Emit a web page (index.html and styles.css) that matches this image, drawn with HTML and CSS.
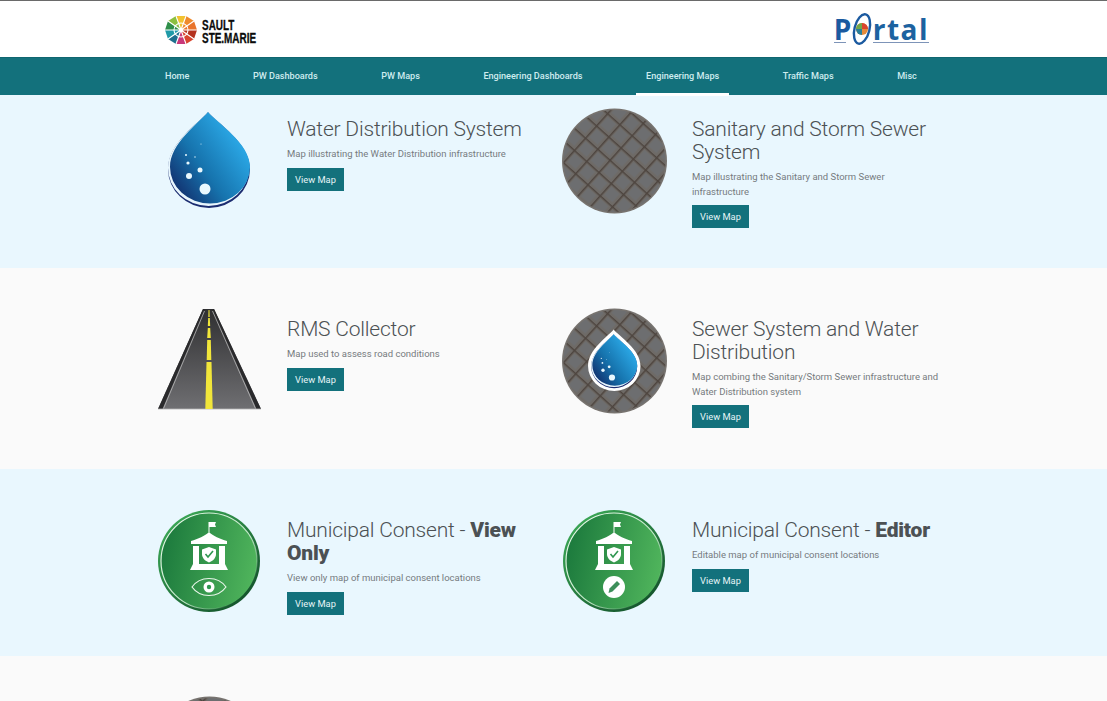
FILE: index.html
```html
<!DOCTYPE html>
<html lang="en">
<head>
<meta charset="utf-8">
<title>Portal - Engineering Maps</title>
<link rel="stylesheet" href="styles.css">
</head>
<body>
<header class="topbar">
  <div class="brand">
    <svg class="brand-mark" viewBox="0 0 32 30" aria-hidden="true">
      <polygon points="16,15 11,1 21,1" fill="#f2c230"/>
      <polygon points="16,15 21,1 29,6" fill="#ef8a2c"/>
      <polygon points="16,15 29,6 32,15" fill="#e9742b"/>
      <polygon points="16,15 32,15 29,24" fill="#b5321f"/>
      <polygon points="16,15 29,24 21,29" fill="#d8452f"/>
      <polygon points="16,15 21,29 11,29" fill="#c8387a"/>
      <polygon points="16,15 11,29 3,24" fill="#1e6f8e"/>
      <polygon points="16,15 3,24 0,15" fill="#1f9aa8"/>
      <polygon points="16,15 0,15 3,6" fill="#2f8f4a"/>
      <polygon points="16,15 3,6 11,1" fill="#8cbf3f"/>
      <g stroke="#fff" stroke-width="1.1" fill="none">
        <path d="M16 15 11 1M16 15 21 1M16 15 29 6M16 15H32M16 15 29 24M16 15 21 29M16 15 11 29M16 15 3 24M16 15H0M16 15 3 6"/>
        <circle cx="16" cy="15" r="7"/>
      </g>
    </svg>
    <div class="brand-name">SAULT<br>STE.MARIE</div>
  </div>
  <div class="portal">
    <span class="portal-p">P</span>
    <svg class="portal-o" viewBox="0 0 24 34" aria-hidden="true">
      <ellipse cx="12" cy="17" rx="7.500" ry="15" transform="rotate(14 12 17)" fill="#fff" stroke="#1b5aa0" stroke-width="2.400"/>
      <circle cx="12" cy="17" r="6" fill="#e58a3a"/>
      <path d="M12 17V11A6 6 0 0 1 18 17Z" fill="#d8452f"/>
      <path d="M12 17H6A6 6 0 0 1 12 11Z" fill="#6fa84a"/>
      <path d="M12 17V23A6 6 0 0 1 6 17Z" fill="#2a7f9a"/>
    </svg>
    <span class="portal-rest">rtal</span>
    <i class="portal-rule portal-rule-a"></i>
    <i class="portal-rule portal-rule-b"></i>
  </div>
</header>
<nav class="nav">
  <a class="nav-link">Home</a>
  <a class="nav-link">PW Dashboards</a>
  <a class="nav-link">PW Maps</a>
  <a class="nav-link">Engineering Dashboards</a>
  <a class="nav-link is-active">Engineering Maps</a>
  <a class="nav-link">Traffic Maps</a>
  <a class="nav-link">Misc</a>
</nav>
<main>
  <section class="band band-blue band-first">
    <article class="card">
      <svg class="icon" viewBox="0 0 105 106" aria-hidden="true">
        <defs>
          <linearGradient id="dropFill" x1="0.05" y1="0.85" x2="0.8" y2="0.25">
            <stop offset="0" stop-color="#12306e"/>
            <stop offset="0.45" stop-color="#1673ad"/>
            <stop offset="1" stop-color="#2aa6e4"/>
          </linearGradient>
          <pattern id="grate" width="16.500" height="16.500" patternUnits="userSpaceOnUse" patternTransform="rotate(42) translate(4 6)">
            <rect width="16.500" height="16.500" fill="#6e6a66"/>
            <rect x="3" y="3" width="11" height="11" fill="#6d6e70"/>
            <path d="M0 0H16.500M0 0V16.500" stroke="#4e453f" stroke-width="3"/>
          </pattern>
          <linearGradient id="greenFill" x1="0" y1="0.4" x2="1" y2="0.6">
            <stop offset="0" stop-color="#1c7a3d"/>
            <stop offset="1" stop-color="#50b55c"/>
          </linearGradient>
          <linearGradient id="greenRim" x1="0.15" y1="0.1" x2="0.85" y2="0.9">
            <stop offset="0" stop-color="#3aa655"/>
            <stop offset="1" stop-color="#14542c"/>
          </linearGradient>
          <linearGradient id="greenShine" x1="0.1" y1="0.1" x2="0.85" y2="0.85">
            <stop offset="0" stop-color="#e6f7e8"/>
            <stop offset="0.65" stop-color="#bfe8c6"/>
            <stop offset="1" stop-color="#bfe8c6" stop-opacity="0"/>
          </linearGradient>
          <linearGradient id="asphalt" x1="0" y1="0" x2="0" y2="1">
            <stop offset="0" stop-color="#2f2f31"/>
            <stop offset="1" stop-color="#6f6f72"/>
          </linearGradient>
          <path id="dropShape" d="M51 4C60 15 93 35 93 61A41 39 0 0 1 11 61C11 35 42 15 51 4Z"/>
          <symbol id="drop" viewBox="0 0 105 106">
            <use href="#dropShape" fill="#1b2c70"/>
            <path d="M51 4C60 15 92 35 92 60A40.500 38 0 0 1 11 60C11 35 42 15 51 4Z" fill="#e8f6fd"/>
            <path d="M51 4C60 15 93 35 93 59A40 36.500 0 0 1 13 59C13 35 42 15 51 4Z" fill="url(#dropFill)"/>
            <g fill="#e9f8fe">
              <circle cx="48" cy="81" r="5.500"/>
              <circle cx="32" cy="68" r="3"/>
              <circle cx="43" cy="62" r="2.500"/>
              <circle cx="31" cy="55" r="1.600"/>
              <circle cx="29" cy="47" r="1"/>
              <circle cx="38" cy="49" r="0.700"/>
              <circle cx="44" cy="36" r="0.500"/>
            </g>
          </symbol>
          <symbol id="manhole" viewBox="0 0 105 106">
            <circle cx="52.500" cy="53" r="52.500" fill="#77736f"/>
            <circle cx="52.500" cy="53" r="51" fill="url(#grate)"/>
          </symbol>
          <symbol id="hall" viewBox="0 0 105 106">
            <circle cx="52" cy="52" r="51" fill="url(#greenRim)"/>
            <circle cx="52" cy="52" r="48" fill="url(#greenFill)" stroke="url(#greenShine)" stroke-width="1.200"/>
            <g fill="#fff">
              <rect x="51.500" y="13" width="1" height="10"/>
              <polygon points="52,13 59,13 58,15.500 59,18 52,18"/>
              <path d="M34 32C41 30 48 27 52 23C56 27 63 30 70 32V35H34Z"/>
              <rect x="36" y="37" width="6" height="18"/>
              <rect x="62" y="37" width="6" height="18"/>
              <polygon points="36,55 68,55 71,61 33,61"/>
              <path d="M52 38 59 40.500V45C59 49 56 52 52 53.500C48 52 45 49 45 45V40.500Z"/>
            </g>
            <path d="M48.500 45 51 48 56 42" fill="none" stroke="#2f9650" stroke-width="1.600"/>
          </symbol>
        </defs>
        <use href="#drop"/>
      </svg>
      <div class="card-body">
        <h2 class="card-title">Water Distribution System</h2>
        <p class="card-text">Map illustrating the Water Distribution infrastructure</p>
        <a class="btn">View Map</a>
      </div>
    </article>
    <article class="card">
      <svg class="icon" viewBox="0 0 105 106" aria-hidden="true"><use href="#manhole"/></svg>
      <div class="card-body">
        <h2 class="card-title">Sanitary and Storm Sewer System</h2>
        <p class="card-text">Map illustrating the Sanitary and Storm Sewer infrastructure</p>
        <a class="btn">View Map</a>
      </div>
    </article>
  </section>

  <section class="band band-grey">
    <article class="card">
      <svg class="icon" viewBox="0 0 105 106" aria-hidden="true">
        <polygon points="46,1 57,1 104,101 1,101" fill="url(#asphalt)"/>
        <polygon points="46,1 47.500,1 5.500,101 1,101" fill="#2a2a2c"/>
        <polygon points="55.500,1 57,1 104,101 99.500,101" fill="#2a2a2c"/>
        <path d="M47.500 3 6.500 100.500M55.500 3 98.500 100.500" stroke="#c9c9c9" stroke-width="0.700" fill="none"/>
        <path d="M1 101H104" stroke="#b5b5b5" stroke-width="0.800"/>
        <g fill="#f1e63a">
          <polygon points="51.500,2 52.500,2 52.700,9 51.300,9"/>
          <polygon points="51.200,10 52.800,10 53.200,18 50.800,18"/>
          <polygon points="50.800,20 53.200,20 53.800,30 50.200,30"/>
          <polygon points="50.200,32 53.800,32 54.300,52 49.700,52"/>
          <polygon points="49.500,54 54.500,54 55.700,101 48.300,101"/>
        </g>
      </svg>
      <div class="card-body">
        <h2 class="card-title">RMS Collector</h2>
        <p class="card-text">Map used to assess road conditions</p>
        <a class="btn">View Map</a>
      </div>
    </article>
    <article class="card">
      <svg class="icon" viewBox="0 0 105 106" aria-hidden="true">
        <use href="#manhole"/>
        <use href="#dropShape" fill="#fff" transform="translate(19 19) scale(.64)"/>
        <use href="#drop" x="23" y="24" width="59" height="59.600"/>
      </svg>
      <div class="card-body">
        <h2 class="card-title">Sewer System and Water Distribution</h2>
        <p class="card-text">Map combing the Sanitary/Storm Sewer infrastructure and Water Distribution system</p>
        <a class="btn">View Map</a>
      </div>
    </article>
  </section>

  <section class="band band-blue">
    <article class="card">
      <svg class="icon" viewBox="0 0 105 106" aria-hidden="true">
        <use href="#hall"/>
        <path d="M35 78C40 71 46 69.500 52 69.500C58 69.500 64 71 69 78C64 85 58 86.500 52 86.500C46 86.500 40 85 35 78Z" fill="none" stroke="#e9f6ea" stroke-width="1.200"/>
        <circle cx="52" cy="78" r="5.500" fill="#fff"/>
        <circle cx="52" cy="78" r="2.200" fill="#2f9650"/>
      </svg>
      <div class="card-body">
        <h2 class="card-title">Municipal Consent - <b class="strong">View Only</b></h2>
        <p class="card-text">View only map of municipal consent locations</p>
        <a class="btn">View Map</a>
      </div>
    </article>
    <article class="card">
      <svg class="icon" viewBox="0 0 105 106" aria-hidden="true">
        <use href="#hall"/>
        <circle cx="52" cy="78" r="11" fill="#fff"/>
        <path d="M46.500 84 47.500 79.500 55 72 58 75 50.500 82.500Z" fill="#3d8f5a"/>
      </svg>
      <div class="card-body">
        <h2 class="card-title">Municipal Consent - <b class="strong">Editor</b></h2>
        <p class="card-text">Editable map of municipal consent locations</p>
        <a class="btn">View Map</a>
      </div>
    </article>
  </section>

  <section class="band band-grey">
    <article class="card">
      <svg class="icon" viewBox="0 0 105 106" aria-hidden="true"><use href="#manhole"/></svg>
    </article>
  </section>
</main>
</body>
</html>
```

FILE: styles.css
```css
* { box-sizing: border-box; }

html, body {
  margin: 0;
  height: 701px;
  overflow: hidden;
}

body {
  background: #fafafa;
  color: #4c5154;
  font-family: Roboto, "Liberation Sans", sans-serif;
}

.topbar {
  height: 57px;
  padding: 0 178px 0 165px;
  background: #fff;
  border-top: 1px solid #6a6a6a;
  display: flex;
  align-items: center;
  justify-content: space-between;
}

.brand {
  display: flex;
  align-items: center;
  gap: 5px;
  padding-top: 2px;
}

.brand-mark {
  width: 32px;
  height: 30px;
}

.brand-name {
  width: 55px;
  margin-top: 3px;
  color: #0b0b0b;
  font: 700 14px/13px "Liberation Sans", sans-serif;
  white-space: nowrap;
  -webkit-text-stroke: 0.300px #0b0b0b;
  transform: scaleX(0.71);
  transform-origin: left center;
}

.portal {
  position: relative;
  display: flex;
  align-items: center;
  height: 36px;
  color: #1b5aa0;
  font: 700 28px/1 "Open Sans", sans-serif;
}

.portal-p {
  width: 17px;
}

.portal-o {
  width: 24px;
  height: 34px;
  margin: 0 -1px 0 -1px;
}

.portal-rest {
  letter-spacing: 1.500px;
  color: #1c62a0;
}

.portal-rule {
  position: absolute;
  bottom: 4px;
  height: 1px;
  background: #7d94b8;
}

.portal-rule-a { left: 0; width: 12px; }
.portal-rule-b { left: 39px; right: 0; }

.nav {
  height: 38px;
  padding-left: 155px;
  display: flex;
  gap: 43.500px;
  background: #13717c;
  border-top: 1px solid #0f6670;
}

.nav-link {
  height: 38px;
  padding: 0 10px;
  color: #cfecef;
  font-size: 9.100px;
  line-height: 37px;
  font-weight: 500;
  white-space: nowrap;
}

.is-active {
  border-bottom: 3px solid #fff;
}

.band {
  padding: 40px 0 41px 157px;
  display: flex;
}

.band-first { padding: 13px 0 40px 157px; }
.band-blue { background: #e9f7fe; }
.band-grey { background: #fafafa; }

.card {
  width: 405px;
  display: flex;
}

.icon {
  flex: none;
  width: 105px;
  height: 106px;
  margin-right: 25px;
}

.card-body {
  width: 250px;
  padding-top: 10px;
}

.card-title {
  margin: 0 0 6px;
  font-size: 21px;
  line-height: 23px;
  font-weight: 300;
  letter-spacing: -0.200px;
}

.strong {
  font-weight: 900;
}

.card-text {
  margin: 0 0 6px;
  color: #767b7e;
  font-size: 9.500px;
  line-height: 14.500px;
}

.btn {
  display: block;
  width: 57px;
  height: 23px;
  background: #13717c;
  color: #e6f5f7;
  font-size: 9.300px;
  font-weight: 400;
  line-height: 23px;
  text-align: center;
}
```
